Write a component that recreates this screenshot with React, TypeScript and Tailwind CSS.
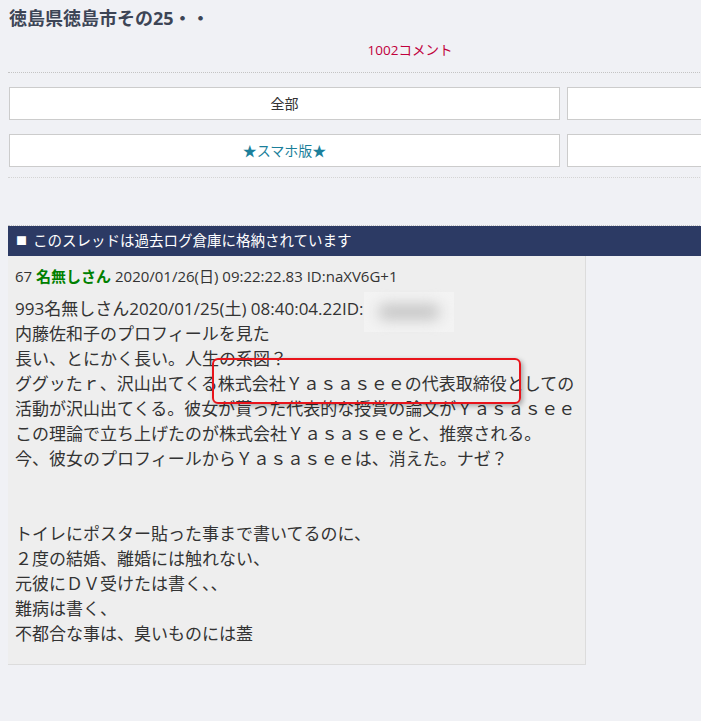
import React from 'react';

const lines1 = [
  '内藤佐和子のプロフィールを見た',
  '長い、とにかく長い。人生の系図？',
  'ググッたｒ、沢山出てくる株式会社Ｙａｓａｓｅｅの代表取締役としての',
  '活動が沢山出てくる。彼女が貰った代表的な授賞の論文がＹａｓａｓｅｅ',
  'この理論で立ち上げたのが株式会社Ｙａｓａｓｅｅと、推察される。',
  '今、彼女のプロフィールからＹａｓａｓｅｅは、消えた。ナゼ？',
  '',
  '',
  'トイレにポスター貼った事まで書いてるのに、',
  '２度の結婚、離婚には触れない、',
  '元彼にＤＶ受けたは書く、、',
  '難病は書く、',
  '不都合な事は、臭いものには蓋',
];

const App: React.FC = () => {
  return (
    <div
      className="min-h-screen w-full overflow-hidden bg-[#f0f1f5] text-[#333]"
      style={{ fontFamily: '"Open Sans", "Noto Sans CJK JP", sans-serif' }}
    >
      <div className="w-[1130px]">
        <h1 className="px-[9px] pt-[5px] text-[18px] font-bold leading-[26px] text-[#3d4556]">
          徳島県徳島市その25・・
        </h1>

        <div className="mt-[9px] w-[820px] text-center text-[13.5px] leading-[20px] text-[#c0003c]">
          1002コメント
        </div>

        <div className="mx-[8px] mt-[12px] border-t border-dotted border-[#c4c4c4]" />

        {/* ボタン */}
        <div className="ml-[9px] mt-[14px] grid grid-cols-[551px_551px] gap-x-[7px] gap-y-[14px]">
          <button className="h-[33px] border border-[#cccccc] bg-white text-[14px] text-[#333]">全部</button>
          <button className="h-[33px] border border-[#cccccc] bg-white text-[14px] text-[#333]"></button>
          <button className="h-[33px] border border-[#cccccc] bg-white text-[14px] text-[#1b7f9b]">★スマホ版★</button>
          <button className="h-[33px] border border-[#cccccc] bg-white text-[14px] text-[#333]"></button>
        </div>

        <div className="mx-[8px] mt-[10px] border-t border-dotted border-[#d4d4d4]" />

        <div className="ml-[8px] mt-[47px] border-t border-dotted border-[#c4c4c4]">
          <div className="flex h-[30px] items-center bg-[#2c3a64] pl-[8px] text-[14.5px] text-white">
            <span className="mr-[6px] text-[11px]">■</span>
            このスレッドは過去ログ倉庫に格納されています
          </div>

          {/* レス */}
          <div className="relative w-[578px] border-r border-b border-[#dcdcdc] bg-[#eeeeee] px-[7px] pt-[10px] pb-[18px]">
            <div className="whitespace-nowrap text-[15px] leading-[20px]">
              67 <span className="font-bold text-[#008000]">名無しさん</span> 2020/01/26(日) 09:22:22.83 ID:naXV6G+1
            </div>
            <div className="mt-[10px] text-[17px] leading-[25px] text-[#333]">
              <div className="whitespace-nowrap">
                993名無しさん2020/01/25(土) 08:40:04.22ID:
                <span className="relative inline-block h-0 w-0 align-top">
                  <span className="absolute left-0 top-[-4px] h-[40px] w-[90px] bg-[#f3f3f3]">
                    <span className="absolute left-[14px] top-[12px] h-[16px] w-[62px] rounded-full bg-[#c6c6c6] blur-[7px]" />
                  </span>
                </span>
              </div>
              {lines1.map((l, i) => (
                <div key={i} className="h-[25px] whitespace-nowrap">
                  {l}
                </div>
              ))}
            </div>

            {/* 赤枠 */}
            <div className="absolute left-[204px] top-[102px] h-[46px] w-[309px] rounded-[6px] border-2 border-[#e8141b] shadow-[2px_2px_5px_rgba(0,0,0,0.3)]" />
          </div>
        </div>
      </div>
    </div>
  );
};

export default App;
